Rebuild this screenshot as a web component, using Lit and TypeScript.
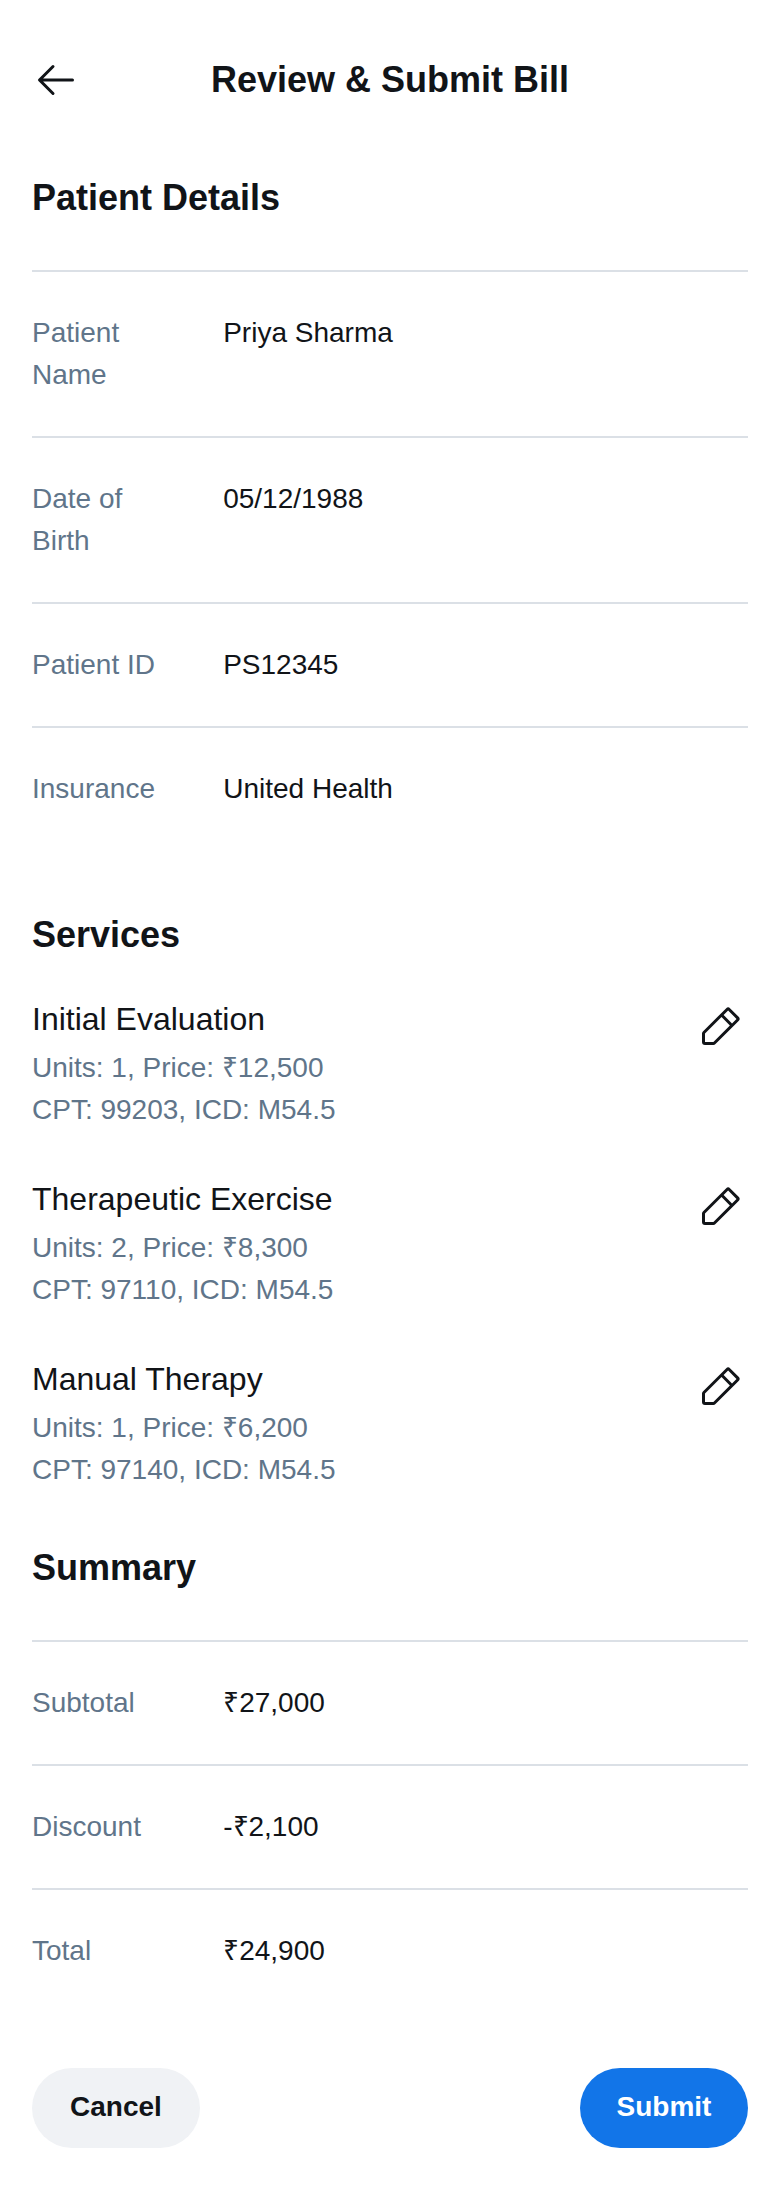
import { LitElement, html, css, svg } from "lit";
import { customElement, property } from "lit/decorators.js";

interface Detail {
  label: string;
  value: string;
}

interface Service {
  name: string;
  units: number;
  price: string;
  cpt: string;
  icd: string;
}

const patientDetails: Detail[] = [
  { label: "Patient Name", value: "Priya Sharma" },
  { label: "Date of Birth", value: "05/12/1988" },
  { label: "Patient ID", value: "PS12345" },
  { label: "Insurance", value: "United Health" },
];

const services: Service[] = [
  { name: "Initial Evaluation", units: 1, price: "₹12,500", cpt: "99203", icd: "M54.5" },
  { name: "Therapeutic Exercise", units: 2, price: "₹8,300", cpt: "97110", icd: "M54.5" },
  { name: "Manual Therapy", units: 1, price: "₹6,200", cpt: "97140", icd: "M54.5" },
];

const summary: Detail[] = [
  { label: "Subtotal", value: "₹27,000" },
  { label: "Discount", value: "-₹2,100" },
  { label: "Total", value: "₹24,900" },
];

const arrowLeft = svg`<path d="M224,128a8,8,0,0,1-8,8H59.31l58.35,58.34a8,8,0,0,1-11.32,11.32l-72-72a8,8,0,0,1,0-11.32l72-72a8,8,0,0,1,11.32,11.32L59.31,120H216A8,8,0,0,1,224,128Z"></path>`;

const pencil = svg`<path d="M227.31,73.37,182.63,28.68a16,16,0,0,0-22.63,0L36.69,152A15.86,15.86,0,0,0,32,163.31V208a16,16,0,0,0,16,16H92.69A15.86,15.86,0,0,0,104,219.31L227.31,96a16,16,0,0,0,0-22.63ZM92.69,208H48V163.31L136,75.31,180.69,120ZM192,108.68,147.31,64l24-24L216,84.68Z"></path>`;

@customElement("detail-list")
export class DetailList extends LitElement {
  @property({ attribute: false }) items: Detail[] = [];

  static styles = css`
    :host {
      display: block;
      padding: 32px;
    }
    .list {
      margin: 0;
    }
    .row {
      display: grid;
      grid-template-columns: 20% 1fr;
      column-gap: 48px;
      padding: 40px 0;
      border-top: 2px solid #dbe0e6;
      font-size: 28px;
      line-height: 42px;
    }
    .label {
      color: #60758a;
    }
    .value {
      margin: 0;
      color: #111418;
    }
  `;

  render() {
    return html`
      <dl class="list">
        ${this.items.map(
          (item) => html`
            <div class="row">
              <dt class="label">${item.label}</dt>
              <dd class="value">${item.value}</dd>
            </div>
          `
        )}
      </dl>
    `;
  }
}

@customElement("service-item")
export class ServiceItem extends LitElement {
  @property({ attribute: false }) service!: Service;

  static styles = css`
    :host {
      display: flex;
      align-items: flex-start;
      justify-content: space-between;
      gap: 32px;
      padding: 24px 32px;
    }
    .name,
    .meta {
      margin: 0;
    }
    .name {
      margin-bottom: 8px;
      color: #111418;
      font-size: 32px;
      font-weight: 400;
      line-height: 40px;
    }
    .meta {
      color: #60758a;
      font-size: 28px;
      line-height: 42px;
    }
    .edit {
      display: flex;
      flex: none;
      align-items: center;
      justify-content: center;
      width: 56px;
      height: 56px;
      padding: 0;
      border: 0;
      background: none;
      color: #111418;
      cursor: pointer;
    }
    .icon {
      width: 48px;
      height: 48px;
      fill: currentColor;
    }
  `;

  render() {
    const { name, units, price, cpt, icd } = this.service;
    return html`
      <div>
        <h3 class="name">${name}</h3>
        <p class="meta">Units: ${units}, Price: ${price}</p>
        <p class="meta">CPT: ${cpt}, ICD: ${icd}</p>
      </div>
      <button class="edit" type="button" aria-label="Edit ${name}">
        <svg class="icon" viewBox="0 0 256 256" aria-hidden="true">${pencil}</svg>
      </button>
    `;
  }
}

@customElement("app-root")
export class AppRoot extends LitElement {
  static styles = css`
    :host {
      display: flex;
      flex-direction: column;
      min-height: 100vh;
      background: #ffffff;
      color: #111418;
      font-family: "Liberation Sans", Arial, sans-serif;
    }
    .header {
      display: flex;
      align-items: center;
      padding: 32px 32px 17px;
    }
    .back {
      display: flex;
      flex: none;
      align-items: center;
      width: 96px;
      height: 96px;
      padding: 0;
      border: 0;
      background: none;
      color: inherit;
      cursor: pointer;
    }
    .icon {
      width: 48px;
      height: 48px;
      fill: currentColor;
    }
    .title,
    .heading {
      margin: 0;
      font-size: 36px;
      font-weight: 700;
      line-height: 42px;
    }
    .title {
      flex: 1;
      padding-right: 96px;
      text-align: center;
    }
    .heading {
      padding: 32px 32px 19px;
    }
    .actions {
      display: flex;
      justify-content: space-between;
      gap: 24px;
      margin-top: auto;
      padding: 24px 32px 64px;
    }
    .button {
      min-width: 168px;
      height: 80px;
      padding: 0 32px 2px;
      border: 0;
      border-radius: 40px;
      background: #f0f2f5;
      color: #111418;
      font-family: inherit;
      font-size: 28px;
      font-weight: 700;
      line-height: 42px;
      cursor: pointer;
    }
    .primary {
      background: #1275e8;
      color: #ffffff;
    }
  `;

  render() {
    return html`
      <header class="header">
        <button class="back" type="button" aria-label="Back">
          <svg class="icon" viewBox="0 0 256 256" aria-hidden="true">${arrowLeft}</svg>
        </button>
        <h1 class="title">Review &amp; Submit Bill</h1>
      </header>
      <main>
        <section>
          <h2 class="heading">Patient Details</h2>
          <detail-list .items=${patientDetails}></detail-list>
        </section>
        <section>
          <h2 class="heading">Services</h2>
          ${services.map((s) => html`<service-item .service=${s}></service-item>`)}
        </section>
        <section>
          <h2 class="heading">Summary</h2>
          <detail-list .items=${summary}></detail-list>
        </section>
      </main>
      <footer class="actions">
        <button class="button" type="button">Cancel</button>
        <button class="button primary" type="button">Submit</button>
      </footer>
    `;
  }
}
